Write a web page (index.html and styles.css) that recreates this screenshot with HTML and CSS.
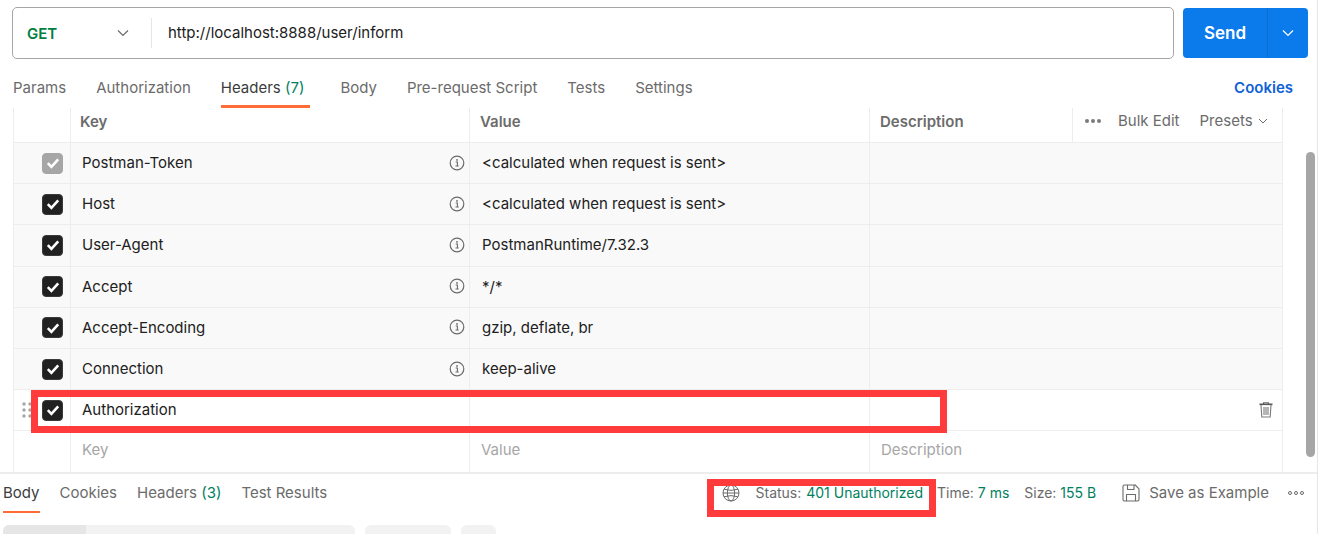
FILE: index.html
```html
<!DOCTYPE html>
<html lang="en">
<head>
<meta charset="utf-8">
<title>Postman request</title>
<link rel="stylesheet" href="styles.css">
</head>
<body>
<div class="page">
  <div class="request-bar">
    <div class="url-box">
      <div class="method"><span class="method-name">GET</span>
        <svg class="chev-method" width="12" height="8" viewBox="0 0 12 8"><path d="M1 1.5l5 5 5-5" fill="none" stroke="#6b6b6b" stroke-width="1.2"/></svg>
      </div>
      <div class="url">http://localhost:8888/user/inform</div>
    </div>
    <div class="send">
      <span class="send-label">Send</span>
      <span class="send-menu"><svg width="12" height="8" viewBox="0 0 12 8"><path d="M1 1.5l5 5 5-5" fill="none" stroke="#fff" stroke-width="1.2"/></svg></span>
    </div>
  </div>

  <div class="tabs">
    <span class="tab">Params</span>
    <span class="tab">Authorization</span>
    <span class="tab active">Headers <em>(7)</em></span>
    <span class="tab">Body</span>
    <span class="tab">Pre-request Script</span>
    <span class="tab">Tests</span>
    <span class="tab">Settings</span>
    <span class="cookies">Cookies</span>
  </div>

  <div class="table-wrap">
    <div class="table">
      <div class="row head">
        <div class="c c0"></div>
        <div class="c c1 b">Key</div>
        <div class="c c2 b">Value</div>
        <div class="c c3 b">Description</div>
        <div class="c c4 tools">
          <span class="dots"><i></i><i></i><i></i></span>
          <span class="bulk">Bulk Edit</span>
          <span class="presets">Presets
            <svg width="10" height="6" viewBox="0 0 10 6"><path d="M1 1l4 4 4-4" fill="none" stroke="#6b6b6b" stroke-width="1"/></svg>
          </span>
        </div>
      </div>

      <div class="row auto">
        <div class="c c0"><span class="check off"><svg width="14" height="12" viewBox="0 0 14 12"><path d="M1.8 6.2l3.6 3.6 6.8-7.400" fill="none" stroke="#fff" stroke-width="2.600"/></svg></span></div>
        <div class="c c1 key">Postman-Token<svg class="info" width="16" height="16" viewBox="0 0 16 16"><circle cx="8" cy="8" r="6.800" fill="none" stroke="#6b6b6b" stroke-width="1.200"/><path d="M6.700 7h1.700v4M6.500 11h3.200" fill="none" stroke="#6b6b6b" stroke-width="1.100"/><circle cx="8" cy="4.900" r=".9" fill="#6b6b6b"/></svg></div>
        <div class="c c2">&lt;calculated when request is sent&gt;</div>
        <div class="c c3"></div>
        <div class="c c4"></div>
      </div>
      <div class="row auto">
        <div class="c c0"><span class="check"><svg width="14" height="12" viewBox="0 0 14 12"><path d="M1.8 6.2l3.6 3.6 6.8-7.400" fill="none" stroke="#fff" stroke-width="2.600"/></svg></span></div>
        <div class="c c1 key">Host<svg class="info" width="16" height="16" viewBox="0 0 16 16"><circle cx="8" cy="8" r="6.800" fill="none" stroke="#6b6b6b" stroke-width="1.200"/><path d="M6.700 7h1.700v4M6.500 11h3.200" fill="none" stroke="#6b6b6b" stroke-width="1.100"/><circle cx="8" cy="4.900" r=".9" fill="#6b6b6b"/></svg></div>
        <div class="c c2">&lt;calculated when request is sent&gt;</div>
        <div class="c c3"></div>
        <div class="c c4"></div>
      </div>
      <div class="row auto">
        <div class="c c0"><span class="check"><svg width="14" height="12" viewBox="0 0 14 12"><path d="M1.8 6.2l3.6 3.6 6.8-7.400" fill="none" stroke="#fff" stroke-width="2.600"/></svg></span></div>
        <div class="c c1 key">User-Agent<svg class="info" width="16" height="16" viewBox="0 0 16 16"><circle cx="8" cy="8" r="6.800" fill="none" stroke="#6b6b6b" stroke-width="1.200"/><path d="M6.700 7h1.700v4M6.500 11h3.200" fill="none" stroke="#6b6b6b" stroke-width="1.100"/><circle cx="8" cy="4.900" r=".9" fill="#6b6b6b"/></svg></div>
        <div class="c c2">PostmanRuntime/7.32.3</div>
        <div class="c c3"></div>
        <div class="c c4"></div>
      </div>
      <div class="row auto">
        <div class="c c0"><span class="check"><svg width="14" height="12" viewBox="0 0 14 12"><path d="M1.8 6.2l3.6 3.6 6.8-7.400" fill="none" stroke="#fff" stroke-width="2.600"/></svg></span></div>
        <div class="c c1 key">Accept<svg class="info" width="16" height="16" viewBox="0 0 16 16"><circle cx="8" cy="8" r="6.800" fill="none" stroke="#6b6b6b" stroke-width="1.200"/><path d="M6.700 7h1.700v4M6.500 11h3.200" fill="none" stroke="#6b6b6b" stroke-width="1.100"/><circle cx="8" cy="4.900" r=".9" fill="#6b6b6b"/></svg></div>
        <div class="c c2">*/*</div>
        <div class="c c3"></div>
        <div class="c c4"></div>
      </div>
      <div class="row auto">
        <div class="c c0"><span class="check"><svg width="14" height="12" viewBox="0 0 14 12"><path d="M1.8 6.2l3.6 3.6 6.8-7.400" fill="none" stroke="#fff" stroke-width="2.600"/></svg></span></div>
        <div class="c c1 key">Accept-Encoding<svg class="info" width="16" height="16" viewBox="0 0 16 16"><circle cx="8" cy="8" r="6.800" fill="none" stroke="#6b6b6b" stroke-width="1.200"/><path d="M6.700 7h1.700v4M6.500 11h3.200" fill="none" stroke="#6b6b6b" stroke-width="1.100"/><circle cx="8" cy="4.900" r=".9" fill="#6b6b6b"/></svg></div>
        <div class="c c2">gzip, deflate, br</div>
        <div class="c c3"></div>
        <div class="c c4"></div>
      </div>
      <div class="row auto">
        <div class="c c0"><span class="check"><svg width="14" height="12" viewBox="0 0 14 12"><path d="M1.8 6.2l3.6 3.6 6.8-7.400" fill="none" stroke="#fff" stroke-width="2.600"/></svg></span></div>
        <div class="c c1 key">Connection<svg class="info" width="16" height="16" viewBox="0 0 16 16"><circle cx="8" cy="8" r="6.800" fill="none" stroke="#6b6b6b" stroke-width="1.200"/><path d="M6.700 7h1.700v4M6.500 11h3.200" fill="none" stroke="#6b6b6b" stroke-width="1.100"/><circle cx="8" cy="4.900" r=".9" fill="#6b6b6b"/></svg></div>
        <div class="c c2">keep-alive</div>
        <div class="c c3"></div>
        <div class="c c4"></div>
      </div>
      <div class="row">
        <div class="c c0"><span class="check"><svg width="14" height="12" viewBox="0 0 14 12"><path d="M1.8 6.2l3.6 3.6 6.8-7.400" fill="none" stroke="#fff" stroke-width="2.600"/></svg></span>
          <svg class="drag" width="10" height="18" viewBox="0 0 10 18"><g fill="#a6a6a6"><circle cx="2" cy="3" r="1.7"/><circle cx="8" cy="3" r="1.7"/><circle cx="2" cy="9" r="1.7"/><circle cx="8" cy="9" r="1.7"/><circle cx="2" cy="15" r="1.7"/><circle cx="8" cy="15" r="1.7"/></g></svg>
        </div>
        <div class="c c1 key">Authorization</div>
        <div class="c c2"></div>
        <div class="c c3"></div>
        <div class="c c4 trash-cell"><svg width="14" height="16" viewBox="0 0 14 16"><path d="M4.500 2V.8h5V2" fill="none" stroke="#6b6b6b" stroke-width="1.100"/><path d="M.5 2.300h13" stroke="#555" stroke-width="1.600"/><path d="M2 3l.8 12h8.400L12 3M5 5v8M7 5v8M9 5v8" fill="none" stroke="#7a7a7a" stroke-width="1.100"/></svg></div>
      </div>
      <div class="row ph">
        <div class="c c0"></div>
        <div class="c c1 key">Key</div>
        <div class="c c2">Value</div>
        <div class="c c3">Description</div>
        <div class="c c4"></div>
      </div>
    </div>
    <div class="scroll-track"><div class="thumb"></div></div>
  </div>

  <div class="response-bar">
    <div class="rtabs">
      <span class="rtab active">Body</span>
      <span class="rtab">Cookies</span>
      <span class="rtab">Headers <em>(3)</em></span>
      <span class="rtab">Test Results</span>
    </div>
    <div class="meta">
      <svg class="globe" width="18" height="18" viewBox="0 0 18 18"><g fill="none" stroke="#6b6b6b" stroke-width="1"><circle cx="9" cy="9" r="8"/><ellipse cx="9" cy="9" rx="3.600" ry="8"/><path d="M2 5.200q7 2.400 14 0M2 12.800q7-2.400 14 0M1 9h16"/></g></svg>
      <span class="stat status">Status: <b>401 Unauthorized</b></span>
      <span class="stat time">Time: <b>7 ms</b></span>
      <span class="stat size">Size: <b>155 B</b></span>
      <span class="save"><svg width="18" height="18" viewBox="0 0 18 18"><path d="M2.500 1h10.700L17 4.800V15.500a1.500 1.500 0 0 1-1.500 1.500h-13A1.500 1.500 0 0 1 1 15.500V2.500A1.500 1.500 0 0 1 2.500 1zM5.500 1v4.500h6.500V1M4.500 17v-6.500h9V17" fill="none" stroke="#6b6b6b" stroke-width="1.100" stroke-linejoin="round"/></svg>Save as Example</span>
      <span class="dots small"><i></i><i></i><i></i></span>
    </div>
  </div>

  <div class="skeleton">
    <div class="sk sk1"><div class="sk-fill"></div></div>
    <div class="sk sk2"></div>
    <div class="sk sk3"></div>
  </div>

  <div class="mark mark-row"></div>
  <div class="mark mark-status"></div>
</div>
</body>
</html>
```
FILE: styles.css
```css
* { box-sizing: border-box; }
html, body { margin: 0; height: 100%; background: #fff; overflow: hidden; }
body { font-family: Inter, "Liberation Sans", sans-serif; font-size: 15px; color: #212121; }
em { font-style: normal; color: #007f5f; }

.page { position: relative; width: 1318px; height: 534px; overflow: hidden; border-right: 1px solid #e6e6e6; }

.request-bar { display: flex; gap: 9px; padding: 7px 9px 0 12px; height: 59px; }
.url-box { flex: 1; display: flex; align-items: center; border: 1px solid #a6a6a6; border-radius: 5px; height: 52px; }
.method { width: 139px; height: 30px; display: flex; align-items: center; justify-content: space-between; padding: 0 22px 0 14px; border-right: 1px solid #e6e6e6; }
.method-name { font-weight: 600; color: #007f3f; }
.url { padding: 0 0 1px 16px; }
.send { width: 125px; height: 50px; margin-top: 1px; display: flex; background: #0b7aea; border-radius: 4px; color: #fff; }
.send-label { width: 85px; padding-bottom: 1px; display: flex; align-items: center; justify-content: center; font-size: 17px; font-weight: 600; border-right: 1px solid #0a6ed2; }
.send-menu { flex: 1; display: flex; align-items: center; justify-content: center; }

.tabs { display: flex; align-items: flex-start; height: 49px; padding: 0 24px 0 13px; color: #6b6b6b; }
.tab { margin-right: 30px; height: 49px; padding-top: 19px; line-height: 20px; white-space: nowrap; }
.tab.active { color: #3c3c3c; padding-right: 6px; border-bottom: 3px solid #ff6c37; }
.cookies { margin-left: auto; padding-top: 19px; line-height: 20px; font-weight: 600; color: #0f62d6; }

.table-wrap { display: flex; height: 364px; }
.table { width: 1270px; margin-left: 13px; border-left: 1px solid #ededed; border-right: 1px solid #ededed; }
.scroll-track { flex: 1; position: relative; }
.thumb { position: absolute; left: 23px; top: 44px; width: 9px; height: 305px; border-radius: 5px; background: #a6a6a6; }

.row { display: grid; grid-template-columns: 57px 399px 400px 203px 1fr; height: 41.2px; border-bottom: 1px solid #ededed; }
.row.head { height: 35px; font-weight: 600; color: #6b6b6b; }
.row.auto { background: #f9f9f9; }
.row.ph { border-bottom: 0; color: #a6a6a6; }
.c { display: flex; align-items: center; position: relative; padding: 0 12px 1px; border-right: 1px solid #ededed; min-width: 0; white-space: nowrap; }
.c.c4 { border-right: 0; }
.c0 { justify-content: flex-end; padding: 0 7px 0 0; }
.c1 { padding-left: 11px; }
.head .c { padding-bottom: 7px; }
.head .c1 { padding-left: 9px; }
.head .c2, .head .c3 { padding-left: 10px; }
.head .c3 { border-right: 1px solid #ededed; }
.row:not(.head) .c3 { border-right: 0; }
.ph .c { padding-bottom: 4px; padding-left: 11px; }
.key { justify-content: space-between; }
.info { margin-right: -8px; }

.check { width: 21px; height: 21px; border-radius: 4px; background: #212121; border: 1px solid #3a3a3a; display: flex; align-items: center; justify-content: center; }
.check.off { background: #a6a6a6; border-color: #a6a6a6; }
.drag { position: absolute; left: 8px; top: 11px; }

.c.tools { color: #6b6b6b; font-weight: 400; padding: 0 0 9px 12px; }
.dots { display: inline-flex; gap: 2px; }
.dots i { width: 4px; height: 4px; border-radius: 50%; background: #7a7a7a; }
.bulk { margin-left: 17px; }
.presets { margin-left: 20px; display: inline-flex; align-items: center; gap: 5px; }
.trash-cell { justify-content: flex-end; padding-right: 9px; }

.response-bar { display: flex; justify-content: space-between; height: 41px; padding: 0 13px 0 3px; border-top: 2px solid #ededed; color: #6b6b6b; }
.rtabs { display: flex; gap: 20px; }
.rtab { height: 39px; padding-top: 9px; line-height: 20px; white-space: nowrap; }
.rtab.active { color: #3c3c3c; border-bottom: 2px solid #ff6c37; }
.meta { display: flex; align-items: center; height: 37px; }
.globe { margin-right: 16px; }
.stat { white-space: nowrap; font-size: 14px; }
.stat b { font-weight: 400; color: #007f5f; }
.status { margin-right: 14px; }
.status b { margin-left: 1px; }
.time { margin-right: 15px; }
.save { display: inline-flex; align-items: center; gap: 9px; margin-left: 26px; }
.dots.small { margin-left: 19px; }
.dots.small i { background: #fff; border: 1px solid #6b6b6b; }

.skeleton { display: flex; gap: 10px; padding: 12px 0 0 3px; }
.sk { height: 30px; border-radius: 6px; background: #f2f2f2; overflow: hidden; }
.sk1 { width: 352px; }
.sk-fill { width: 83px; height: 100%; background: #e6e6e6; }
.sk2 { width: 86px; }
.sk3 { width: 35px; }

.mark { position: absolute; border: 7px solid #ff3b3b; }
.mark-row { left: 31px; top: 390px; width: 916px; height: 43px; }
.mark-status { left: 707px; top: 479px; width: 229px; height: 38px; }
```
